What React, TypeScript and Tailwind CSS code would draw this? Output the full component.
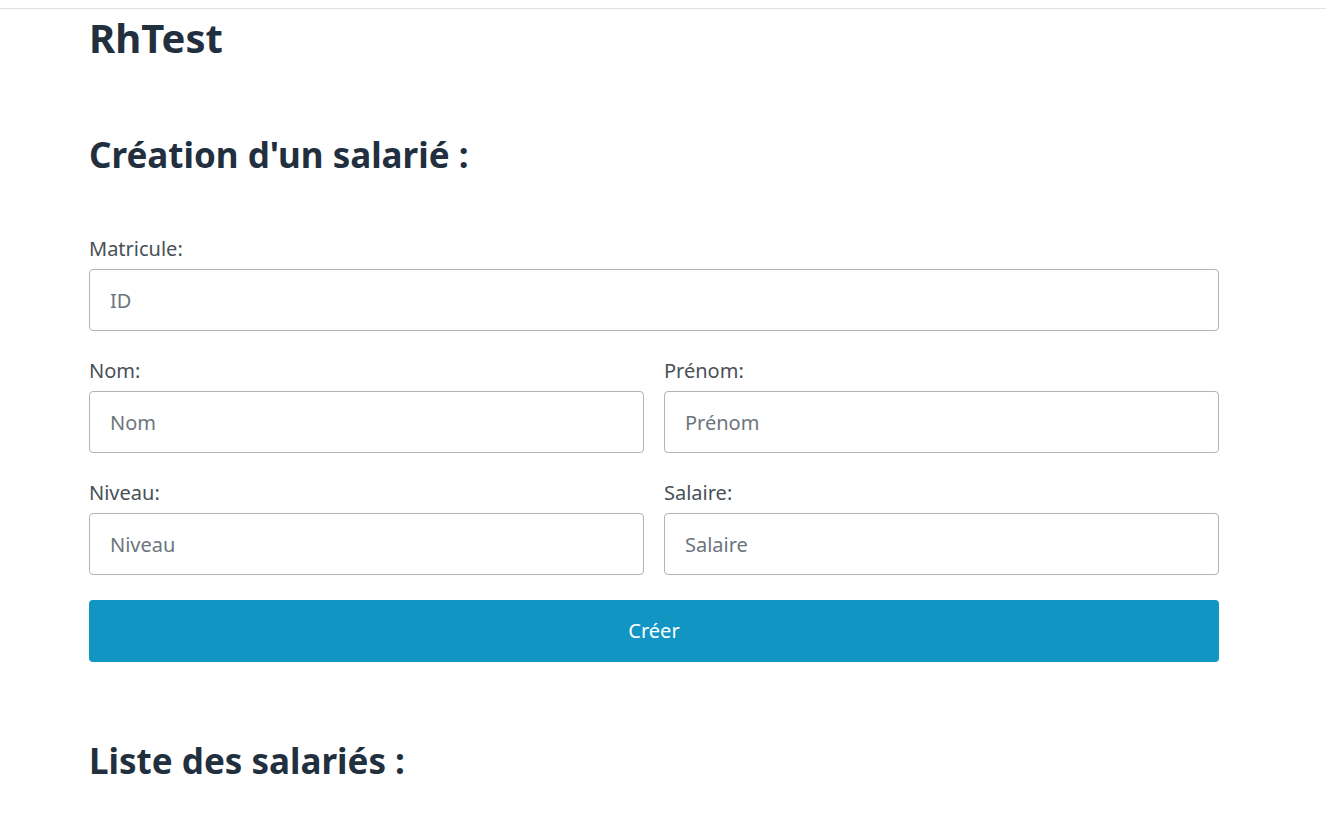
import React from "react";

function Field({ label, placeholder }: { label: string; placeholder: string }) {
  return (
    <div className="flex flex-col">
      <label className="text-[20px] leading-[30px] text-[#495057] mb-[5px]">{label}</label>
      <input
        className="h-[62px] w-full rounded-[4px] border border-[#adb5bd] bg-white px-[20px] text-[20px] text-[#495057] placeholder:text-[#6c757d] outline-none"
        placeholder={placeholder}
      />
    </div>
  );
}

export default function App() {
  return (
    <div className="min-h-screen bg-white" style={{ fontFamily: '"Noto Sans", "Open Sans", sans-serif' }}>
      <div className="h-[9px] border-b border-[#dee2e6]" />
      <div className="ml-[89px] w-[1130px]">
        <h1 className="mt-[5px] text-[40px] leading-[48px] font-bold text-[#222f3e]">RhTest</h1>
        <h2 className="mt-[72px] text-[35px] leading-[42px] font-bold text-[#222f3e]">Création d'un salarié :</h2>
        <div className="mt-[58px] flex flex-col gap-[25px]">
          <Field label="Matricule:" placeholder="ID" />
          <div className="grid grid-cols-2 gap-x-[20px]">
            <Field label="Nom:" placeholder="Nom" />
            <Field label="Prénom:" placeholder="Prénom" />
          </div>
          <div className="grid grid-cols-2 gap-x-[20px]">
            <Field label="Niveau:" placeholder="Niveau" />
            <Field label="Salaire:" placeholder="Salaire" />
          </div>
        </div>
        <button className="mt-[25px] h-[62px] w-full rounded-[4px] bg-[#1195c3] text-[20px] text-white">
          Créer
        </button>
        <h2 className="mt-[78px] text-[35px] leading-[42px] font-bold text-[#222f3e]">Liste des salariés :</h2>
      </div>
    </div>
  );
}
